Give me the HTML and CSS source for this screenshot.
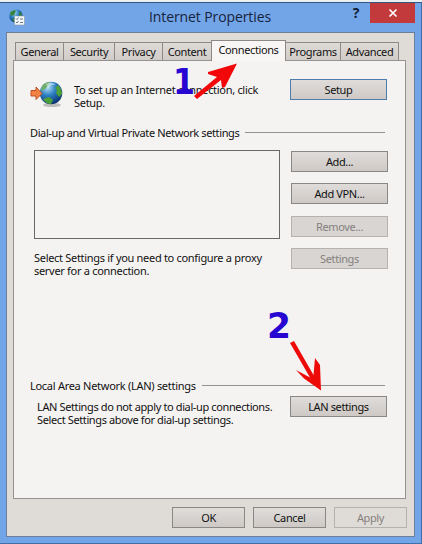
FILE: index.html
```
<!DOCTYPE html>
<html lang="en">
<head>
<meta charset="utf-8">
<title>Internet Properties</title>
<link rel="stylesheet" href="styles.css">
</head>
<body>
<div class="window">
  <header class="titlebar">
    <svg class="app-icon" viewBox="0 0 16 17">
      <defs><radialGradient id="globe" cx=".35" cy=".25" r=".8"><stop offset="0" stop-color="#b9e4f6"/><stop offset=".45" stop-color="#2c7fc3"/><stop offset="1" stop-color="#092e6c"/></radialGradient></defs>
      <circle cx="7" cy="7" r="6.8" fill="url(#globe)"/>
      <path d="M1 4Q4 0 7 2L5 6 2 7ZM3 10l4-1 1 4-3 0ZM10 2l3 3-1 3-2-2Z" fill="#36823d"/>
      <path d="M5.500 7h10v9h-10z" fill="#f5f7f8" stroke="#8d9ba5" stroke-width=".6"/>
      <path d="M7 9.500l1 1 1.500-2M7 13l1 1 1.500-2M11 10h3M11 13.500h3" fill="none" stroke="#526b7b" stroke-width=".9"/>
    </svg>
    <h1>Internet Properties</h1>
    <span class="help">?</span>
    <button class="close" aria-label="Close"><svg viewBox="0 0 10 10"><path d="M1.500 1.500l7 7M8.500 1.500l-7 7" stroke="#fff" stroke-width="1.700"/></svg></button>
  </header>
  <main class="client">
    <nav class="tabs">
      <span class="tab general">General</span><span class="tab security">Security</span><span class="tab privacy">Privacy</span><span class="tab content">Content</span><span class="tab active">Connections</span><span class="tab programs">Programs</span><span class="tab advanced">Advanced</span>
    </nav>
    <section class="page">
      <div class="setup-row">
        <svg class="setup-icon" viewBox="0 0 34 28">
          <ellipse cx="22" cy="25" rx="9" ry="2" fill="#bdbdbb"/>
          <circle cx="21" cy="13" r="11.300" fill="url(#globe)"/>
          <path d="M28 5q4 4 4 9l-3 3-3-4 1-3-2-2ZM13 19l6-2 4 3-2 4q-5 0-8-5Z" fill="#4d9f38"/>
          <path d="M12 6Q15 2 20 2l-2 4-4 4-3 1Z" fill="#6fae6b"/>
          <path d="M16 4q6-3 10 1-5-1-8 3Z" fill="#fff" opacity=".45"/>
          <path d="M1 10.500h5V7l6 6.500-6 6v-3.500H1Z" fill="#f38345" stroke="#bd4e25"/>
        </svg>
        <p class="setup-text">To set up an Internet connection, click<br>Setup.</p>
        <button class="btn default">Setup</button>
      </div>
      <h2 class="heading dial"><span>Dial-up and Virtual Private Network settings</span></h2>
      <div class="dial-grid">
        <div class="list"></div>
        <div class="actions">
          <button class="btn">Add...</button>
          <button class="btn">Add VPN...</button>
          <button class="btn off">Remove...</button>
          <button class="btn off">Settings</button>
        </div>
        <p class="proxy">Select Settings if you need to configure a proxy<br>server for a connection.</p>
      </div>
      <h2 class="heading lan"><span>Local Area Network (LAN) settings</span></h2>
      <div class="lan-row">
        <p>LAN Settings do not apply to dial-up connections.<br>Select Settings above for dial-up settings.</p>
        <button class="btn">LAN settings</button>
      </div>
    </section>
    <footer class="footer">
      <button class="btn">OK</button>
      <button class="btn">Cancel</button>
      <button class="btn apply">Apply</button>
    </footer>
  </main>
  <svg class="marks" viewBox="0 0 422 544">
    <text x="173" y="94" textLength="22" lengthAdjust="spacingAndGlyphs">1</text>
    <text x="267" y="338" textLength="24" lengthAdjust="spacingAndGlyphs">2</text>
    <path d="M194 96L217 77L208 74V72L237 63.500L225 87L222 88L221 80L197 99Z" fill="#f20808"/>
    <path d="M290 343l4-2 19.500 34 1.500-17 5 7 1 25.500-17-12-8-8.500 14 7.500Z" fill="#ed0b08"/>
  </svg>
</div>
</body>
</html>
```
FILE: styles.css
```
* { box-sizing: border-box; }
body { margin: 0; background: #e9edf1; font: 11px/13px "Noto Sans", sans-serif; letter-spacing: -0.38px; color: #111; }
p, h1, h2 { margin: 0; font-weight: normal; font-size: inherit; }
button { font: inherit; letter-spacing: inherit; color: inherit; padding: 0; }
.window { position: relative; width: 422px; height: 544px; padding: 0 7px 6px 6px; border-top: 2px solid #eceff2; background: #72a5e8; box-shadow: inset 0 1px #35577f, inset -1px -1px #416fa9; }
.titlebar { display: flex; height: 30px; padding: 1px 0 0 3px; }
.app-icon { flex: none; width: 16px; height: 17px; margin-top: 6px; }
h1 { flex: none; width: 124px; margin: 6px 0 0 124px; font: 14px/16px "Open Sans", sans-serif; letter-spacing: -0.1px; color: #17233a; white-space: nowrap; }
.help { width: 12px; margin: 3px 0 0 77px; font: bold 14px/14px "Open Sans", sans-serif; text-align: center; color: #111d32; }
.close { display: flex; align-items: center; justify-content: center; flex: none; width: 45px; height: 20px; margin-left: 8px; border: 0; background: #c23a3b; }
.close svg { width: 10px; height: 10px; }
.client { height: 505px; padding: 7px 8px 0 6px; border: 1px solid #6d7f9b; background: #dfdbd7; }
.tabs { display: flex; align-items: flex-end; height: 20px; padding-left: 2px; }
.tab { flex: none; height: 18px; padding-top: 2px; border: 1px solid #8d8987; border-bottom: 0; background: linear-gradient(#dedad7, #d1ccc8); text-align: center; white-space: nowrap; }
.general { width: 49px; }
.security { width: 52px; margin-left: -1px; }
.privacy { width: 49px; margin-left: -1px; }
.content { width: 50px; margin-left: -1px; }
.active { position: relative; width: 75px; height: 21px; margin: 0 0 -1px -1px; background: #f8f6f4; }
.programs { width: 56px; margin-left: -1px; }
.advanced { width: 59px; margin-left: -1px; }
.page { width: 393px; height: 439px; padding: 18px 18px 0 16px; border: 1px solid #949391; background: #f5f3f2; }
.btn { display: block; flex: none; width: 97px; height: 21px; border: 1px solid #8a8886; background: linear-gradient(#dfdcda, #cec9c5); text-align: center; white-space: nowrap; }
.btn.default { border-color: #4d7dac; }
.btn.off { border-color: #b5b2b0; background: #d9d5d2; color: #85817e; }
.setup-row { display: flex; height: 47px; white-space: nowrap; }
.setup-icon { width: 34px; height: 28px; margin-top: 1px; }
.setup-text { width: 226px; padding: 4px 0 0 10px; letter-spacing: -0.3px; }
.heading { display: flex; align-items: center; height: 13px; white-space: nowrap; }
.heading::after { content: ""; flex: 1; height: 1px; margin: 0 2px 0 6px; background: #939290; }
.dial-grid { display: grid; grid-template: 89px auto / 257px 97px; margin-top: 11px; padding-left: 4px; height: 120px; white-space: nowrap; }
.list { width: 246px; height: 89px; border: 1px solid #686866; }
.actions { grid-area: 1 / 2 / 3; padding-top: 1px; display: grid; grid-auto-rows: 21px; row-gap: 11.4px; align-content: start; }
.proxy { padding-top: 12px; letter-spacing: -0.3px; }
.lan { margin-top: 109px; letter-spacing: -0.28px; }
.lan-row { display: flex; padding-left: 7px; margin-top: 5px; white-space: nowrap; }
.lan-row p { width: 253px; padding-top: 3px; }
.lan-row .btn { margin-top: -1px; }
.footer { display: flex; gap: 8px; margin-top: 8px; padding-left: 159px; }
.footer .btn { width: 73px; }
.footer .apply { border-color: #b5b1ae; background: #dfdbd7; color: #85817e; }
.marks { position: absolute; top: -2px; left: 0; width: 422px; height: 544px; pointer-events: none; }
.marks text { font: bold 35px "DejaVu Sans", sans-serif; letter-spacing: 0; fill: #2606d0; }
```
